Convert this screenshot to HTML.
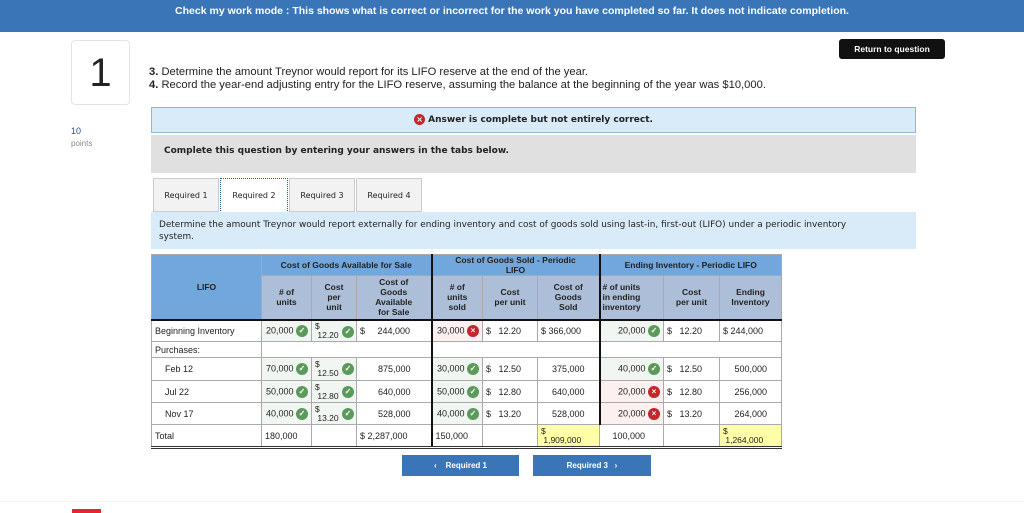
<!DOCTYPE html>
<html><head><meta charset="utf-8"><style>
*{box-sizing:border-box;margin:0;padding:0}
body{width:1024px;height:513px;overflow:hidden;background:#fff;font-family:"Liberation Sans",sans-serif;color:#222;position:relative}
.abs{position:absolute}
.top{left:0;top:0;width:1024px;height:32px;background:#3a76b7;color:#fff;font-weight:bold;font-size:10.5px;text-align:center;line-height:22px}
table{position:absolute;left:151px;top:254px;border-collapse:collapse;table-layout:fixed;font-size:9px}
td{border:1px solid #aaa;padding:0 3px;white-space:nowrap;overflow:hidden;position:relative}
.h1{background:#71a7dc;font-weight:bold;text-align:center;font-size:8.5px;line-height:10px}
.h2{background:#adbfd8;font-weight:bold;text-align:center;line-height:10px;font-size:8.5px}
.bl{border-left:2px solid #111}
.g{background:#f2f6f2}.r{background:#fdf0f0}.y{background:#ffffa8}
.ok,.no{display:inline-block;width:12px;height:12px;border-radius:50%;color:#fff;font-size:8px;line-height:12px;text-align:center;vertical-align:middle;font-weight:bold}
.ok{background:#5b9a5b}.no{background:#c4262b}
.rt{text-align:right}
.d{font-size:8.5px;line-height:9px}
.btn{background:#3a76b7;color:#fff;font-weight:bold;font-size:8px;text-align:center;line-height:21px;height:21px}
.v{font-family:"DejaVu Sans",sans-serif}
.tab{height:34px;background:#f2f2f2;border:1px solid #ccc;font-size:8px;text-align:center;line-height:34px}
</style></head><body>
<div class="abs top">Check my work mode : This shows what is correct or incorrect for the work you have completed so far. It does not indicate completion.</div>
<div class="abs" style="left:839px;top:39px;width:106px;height:20px;background:#111;border-radius:3px;color:#fff;font-weight:bold;font-size:8.5px;text-align:center;line-height:20px">Return to question</div>
<div class="abs" style="left:71px;top:40px;width:59px;height:65px;border:1px solid #e4e4e4;border-radius:4px;font-size:40px;text-align:center;line-height:64px;color:#222">1</div>
<div class="abs" style="left:71px;top:126px;font-size:9px;color:#1f4e8a">10</div>
<div class="abs" style="left:71px;top:139px;font-size:8px;color:#888">points</div>
<div class="abs" style="left:149px;top:66px;font-size:11.2px;line-height:13px">
<b>3.</b> Determine the amount Treynor would report for its LIFO reserve at the end of the year.<br>
<b>4.</b> Record the year-end adjusting entry for the LIFO reserve, assuming the balance at the beginning of the year was $10,000.</div>
<div class="abs v" style="left:151px;top:107px;width:765px;height:26px;background:#d9ebf9;border:1px solid #8fb7dc;text-align:center;font-size:9px;font-weight:bold;line-height:25px"><span class="no" style="width:11px;height:11px;line-height:11px">×</span> Answer is complete but not entirely correct.</div>
<div class="abs v" style="left:151px;top:135px;width:765px;height:38px;background:#e0e0e0;font-size:9px;font-weight:bold;line-height:32px;padding-left:13px">Complete this question by entering your answers in the tabs below.</div>
<div class="abs tab v" style="left:153px;top:178px;width:66px">Required 1</div>
<div class="abs tab v" style="left:220px;top:178px;width:68px;height:35px;background:#fff;border:1px dotted #2a5a9a">Required 2</div>
<div class="abs tab v" style="left:289px;top:178px;width:66px">Required 3</div>
<div class="abs tab v" style="left:356px;top:178px;width:66px">Required 4</div>
<div class="abs v" style="left:151px;top:212px;width:765px;height:37px;background:#d9ebf9;font-size:8.9px;line-height:12px;padding:7px 40px 7px 8px">Determine the amount Treynor would report externally for ending inventory and cost of goods sold using last-in, first-out (LIFO) under a periodic inventory system.</div>

<table>
<colgroup><col style="width:110px"><col style="width:50px"><col style="width:45px"><col style="width:75px"><col style="width:51px"><col style="width:55px"><col style="width:62px"><col style="width:64px"><col style="width:56px"><col style="width:62px"></colgroup>
<tr style="height:21px"><td class="h1" rowspan="2" style="border-bottom:2px solid #111">LIFO</td><td class="h1" colspan="3">Cost of Goods Available for Sale</td><td class="h1 bl" colspan="3">Cost of Goods Sold - Periodic<br>LIFO</td><td class="h1 bl" colspan="3">Ending Inventory - Periodic LIFO</td></tr>
<tr style="height:44px;border-bottom:2px solid #111"><td class="h2"># of<br>units</td><td class="h2">Cost<br>per<br>unit</td><td class="h2">Cost of<br>Goods<br>Available<br>for Sale</td><td class="h2 bl"># of<br>units<br>sold</td><td class="h2">Cost<br>per unit</td><td class="h2">Cost of<br>Goods<br>Sold</td><td class="h2 bl" style="text-align:left;padding:0 2px"># of units<br>in ending<br>inventory</td><td class="h2">Cost<br>per unit</td><td class="h2">Ending<br>Inventory</td></tr>
<tr style="height:22px"><td>Beginning Inventory</td><td class="g rt">20,000 <span class="ok">✓</span></td><td class="g d">$<br>&nbsp;12.20 <span class="ok" style="position:absolute;right:2px;top:5px">✓</span></td><td>$ &nbsp;&nbsp;&nbsp;&nbsp;244,000</td><td class="r rt bl">30,000 <span class="no">×</span></td><td>$ &nbsp;&nbsp;12.20</td><td>$ 366,000</td><td class="g rt bl">20,000 <span class="ok">✓</span></td><td>$ &nbsp;&nbsp;12.20</td><td>$ 244,000</td></tr>
<tr style="height:16px"><td>Purchases:</td><td colspan="3"></td><td class="bl" colspan="3"></td><td class="bl" colspan="3"></td></tr>
<tr style="height:23px"><td style="padding-left:13px">Feb 12</td><td class="g rt">70,000 <span class="ok">✓</span></td><td class="g d">$<br>&nbsp;12.50 <span class="ok" style="position:absolute;right:2px;top:5px">✓</span></td><td class="rt" style="padding-right:20px">875,000</td><td class="g rt bl">30,000 <span class="ok">✓</span></td><td>$ &nbsp;&nbsp;12.50</td><td class="rt" style="padding-right:14px">375,000</td><td class="g rt bl">40,000 <span class="ok">✓</span></td><td>$ &nbsp;&nbsp;12.50</td><td class="rt" style="padding-right:14px">500,000</td></tr>
<tr style="height:22px"><td style="padding-left:13px">Jul 22</td><td class="g rt">50,000 <span class="ok">✓</span></td><td class="g d">$<br>&nbsp;12.80 <span class="ok" style="position:absolute;right:2px;top:5px">✓</span></td><td class="rt" style="padding-right:20px">640,000</td><td class="g rt bl">50,000 <span class="ok">✓</span></td><td>$ &nbsp;&nbsp;12.80</td><td class="rt" style="padding-right:14px">640,000</td><td class="r rt bl">20,000 <span class="no">×</span></td><td>$ &nbsp;&nbsp;12.80</td><td class="rt" style="padding-right:14px">256,000</td></tr>
<tr style="height:22px"><td style="padding-left:13px">Nov 17</td><td class="g rt">40,000 <span class="ok">✓</span></td><td class="g d">$<br>&nbsp;13.20 <span class="ok" style="position:absolute;right:2px;top:5px">✓</span></td><td class="rt" style="padding-right:20px">528,000</td><td class="g rt bl">40,000 <span class="ok">✓</span></td><td>$ &nbsp;&nbsp;13.20</td><td class="rt" style="padding-right:14px">528,000</td><td class="r rt bl">20,000 <span class="no">×</span></td><td>$ &nbsp;&nbsp;13.20</td><td class="rt" style="padding-right:14px">264,000</td></tr>
<tr style="height:23px;border-bottom:3px double #333"><td>Total</td><td>180,000</td><td></td><td>$ 2,287,000</td><td class="bl">150,000</td><td></td><td class="y d">$<br>&nbsp;1,909,000</td><td class="rt" style="padding-right:18px">100,000</td><td></td><td class="y d">$<br>&nbsp;1,264,000</td></tr>
</table>

<div class="abs btn" style="left:402px;top:455px;width:117px">&lsaquo;&nbsp;&nbsp;&nbsp; Required 1</div>
<div class="abs btn" style="left:533px;top:455px;width:118px">Required 3 &nbsp;&nbsp;&rsaquo;</div>
<div class="abs" style="left:0;top:501px;width:1024px;height:1px;background:#f2f2f2"></div>
<div class="abs" style="left:72px;top:509px;width:29px;height:4px;background:#e5262c"></div>
</body></html>
